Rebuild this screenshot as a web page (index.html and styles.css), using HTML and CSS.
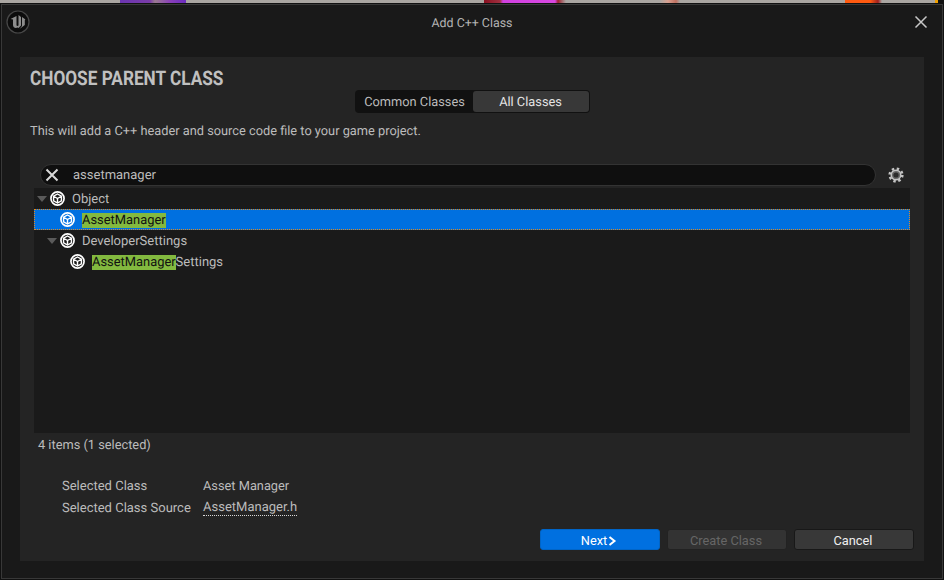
FILE: index.html
```html
<!DOCTYPE html>
<html lang="en">
<head>
<meta charset="utf-8">
<title>Add C++ Class</title>
<link rel="stylesheet" href="styles.css">
</head>
<body>
<div class="backdrop"></div>
<div class="window">
  <header class="titlebar">
    <svg class="logo" width="24" height="24" viewBox="0 0 24 24">
      <circle cx="12" cy="12" r="11" fill="#0c0c0c" stroke="#484848" stroke-width="1.2"/>
      <path d="M4.500 9L10.500 6V15C10.500 16 11.500 16.200 12.500 15.500V5L15 7V15.500L12.500 18L11.500 17.500C9.500 18.500 7 17.500 7 15V9.500Z" fill="#8c8c8c"/>
      <path d="M16 7L19.500 9.500C19 9.500 18.800 9.800 18.800 10.500V15L13.500 19L16 16Z" fill="#8c8c8c"/>
    </svg>
    <span class="title">Add C++ Class</span>
    <svg class="close" width="14" height="14" viewBox="0 0 14 14">
      <path d="M1.500 1.500l11 11M12.500 1.500l-11 11" stroke="#c8c8c8" stroke-width="1.500" fill="none"/>
    </svg>
  </header>
  <main class="panel">
    <h1 class="heading">CHOOSE PARENT CLASS</h1>
    <div class="tabs-wrap">
      <div class="tabs">
        <span class="tab">Common Classes</span>
        <span class="tab tab-active">All Classes</span>
      </div>
    </div>
    <p class="desc">This will add a C++ header and source code file to your game project.</p>
    <div class="search-row">
      <div class="search">
        <svg class="clear" width="14" height="14" viewBox="0 0 14 14">
          <path d="M1.500 1.500l11 11M12.500 1.500l-11 11" stroke="#d8d8d8" stroke-width="2" fill="none"/>
        </svg>
        <span class="search-text">assetmanager</span>
      </div>
      <svg class="gear" width="16" height="16" viewBox="0 0 16 16">
        <circle cx="8" cy="8" r="6.300" fill="none" stroke="#c4c4c4" stroke-width="2.600" stroke-dasharray="2.400 2.548"/>
        <circle cx="8" cy="8" r="4.800" fill="#6a6a6a" stroke="#c4c4c4" stroke-width="1.400"/>
        <circle cx="8" cy="8" r="2.600" fill="#2c2c2c"/>
      </svg>
    </div>
    <div class="tree">
      <div class="row">
        <span class="arrow"></span>
        <svg class="cube" viewBox="0 0 16 16"><use href="#cube"/></svg>
        <span class="label">Object</span>
      </div>
      <div class="row row-selected indent-1">
        <svg class="cube" viewBox="0 0 16 16"><use href="#cube"/></svg>
        <span class="label"><mark class="hit">AssetManager</mark></span>
      </div>
      <div class="row indent-arrow">
        <span class="arrow"></span>
        <svg class="cube" viewBox="0 0 16 16"><use href="#cube"/></svg>
        <span class="label">DeveloperSettings</span>
      </div>
      <div class="row indent-2">
        <svg class="cube" viewBox="0 0 16 16"><use href="#cube"/></svg>
        <span class="label"><mark class="hit">AssetManager</mark>Settings</span>
      </div>
    </div>
    <div class="status">4 items (1 selected)</div>
    <dl class="details">
      <div class="detail"><dt>Selected Class</dt><dd>Asset Manager</dd></div>
      <div class="detail"><dt>Selected Class Source</dt><dd><span class="link">AssetManager.h</span></dd></div>
    </dl>
    <div class="actions">
      <button class="btn btn-primary">Next<svg class="chev" width="9" height="10" viewBox="0 0 9 10"><path d="M1.500 1l5 4-5 4" fill="none" stroke="#fff" stroke-width="2"/></svg></button>
      <button class="btn btn-disabled">Create Class</button>
      <button class="btn">Cancel</button>
    </div>
  </main>
</div>
<svg class="defs" width="0" height="0">
  <symbol id="cube" viewBox="0 0 16 16">
    <circle cx="8" cy="8" r="7" fill="none" stroke="#fff" stroke-width="1.800"/>
    <path d="M8 3.200l4.200 2.400v4.800L8 12.800l-4.200-2.400V5.600zM3.800 5.600L8 8l4.200-2.400M8 8v4.800" fill="none" stroke="#fff" stroke-width="1.500"/>
  </symbol>
</svg>
</body>
</html>
```
FILE: styles.css
```css
* { box-sizing: border-box; }
html, body { height: 100%; }
body {
  margin: 0;
  background: #111;
  display: flex;
  flex-direction: column;
  overflow: hidden;
  padding: 0 1px 1px;
  font-family: Roboto, "Liberation Sans", sans-serif;
  font-size: 12.8px;
  text-rendering: geometricPrecision;
  color: #bcbcbc;
}
.backdrop {
  height: 3px;
  flex: none;
  margin: 0 5px 1px -1px;
  background: linear-gradient(90deg,
    #aaa6a2 0, #aaa6a2 120px, #6b35b0 120px, #7a3ca8 150px, #9a7a90 155px, #8a40b8 170px, #6b2cc0 186px, #aaa6a2 186px,
    #aaa6a2 484px, #8a1020 484px, #a03040 500px, #d040e0 503px, #d848e0 555px, #a02030 558px, #aaa6a2 566px,
    #aaa6a2 660px, #d8a090 668px, #c07060 676px, #aaa6a2 680px,
    #aaa6a2 845px, #ff5a10 845px, #ff5a10 870px, #a02020 878px, #aaa6a2 882px,
    #aaa6a2 935px, #f0a000 935px, #f0a000 938px);
}
.window {
  flex: 1;
  min-height: 0;
  display: flex;
  flex-direction: column;
  background: #191919;
  border: 1px solid #383838;
}
.titlebar {
  height: 52px;
  flex: none;
  display: flex;
  align-items: center;
  justify-content: space-between;
  position: relative;
  padding: 0 14px 18px 4px;
}
.title {
  flex: 1;
  text-align: center;
  color: #b4b4b4;
  font-size: 12.4px;
  padding-top: 2px;
}
.panel {
  flex: 1;
  min-height: 0;
  margin: 0 18px 17px;
  background: #242424;
  display: flex;
  flex-direction: column;
}
.heading {
  margin: 9px 0 0 10px;
  font-size: 20px;
  line-height: 24px;
  font-weight: 700;
  color: #c0c0c0;
  transform: scaleX(0.86);
  transform-origin: left center;
  white-space: nowrap;
}
.tabs-wrap { display: flex; justify-content: center; }
.tabs {
  display: flex;
  background: #111;
  border-radius: 4px;
  padding: 1px;
  height: 23px;
  width: 235px;
}
.tab {
  display: flex;
  align-items: center;
  justify-content: center;
  width: 117px;
  padding: 2px 0 0 1px;
}
.tab-active {
  flex: 1;
  background: #383838;
  border-radius: 3px;
  color: #e4e4e4;
  padding-left: 0;
}
.desc { margin: 10px 0 0 10px; line-height: 17px; }
.search-row {
  display: flex;
  align-items: center;
  margin: 24px 14px 0 20px;
  height: 22px;
  gap: 12px;
}
.search {
  flex: 1;
  height: 22px;
  display: flex;
  align-items: center;
  background: #0f0f0f;
  border: 1px solid #333;
  border-radius: 11px;
  padding-left: 4px;
  color: #bcbcbc;
}
.clear { flex: none; }
.search-text { margin-left: 14px; font-size: 13px; }
.gear { flex: none; margin-right: 6px; }
.tree {
  margin: 2px 14px 0;
  height: 245px;
  flex: none;
  background: #1a1a1a;
}
.row {
  height: 21px;
  display: flex;
  align-items: center;
  padding-left: 3px;
  font-size: 13px;
}
.label { padding-top: 2px; }
.arrow {
  width: 0;
  height: 0;
  flex: none;
  border-left: 5px solid transparent;
  border-right: 5px solid transparent;
  border-top: 6px solid #5a5a5a;
  margin-right: 3px;
}
.cube { width: 15px; height: 15px; flex: none; margin-right: 7px; }
.indent-1 { padding-left: 26px; }
.indent-arrow { padding-left: 13px; }
.indent-2 { padding-left: 36px; }
.row-selected {
  background: #0070e0;
  outline: 1px dotted #e08a20;
  outline-offset: -1px;
  color: #111;
}
.hit {
  background: #83b93f;
  color: #111;
  display: inline-block;
  line-height: 15px;
  font-size: 12.9px;
}
.status { margin: 4px 0 0 18px; line-height: 17px; }
.details { margin: 21px 0 0 42px; }
.detail { display: flex; height: 22px; align-items: center; }
.detail dt { width: 141px; font-size: 13px; }
.detail dd { margin: 0; }
.link { border-bottom: 1px dotted #d8d8d8; line-height: 14px; display: inline-block; font-size: 13px; }
.actions {
  display: flex;
  justify-content: flex-end;
  gap: 7px;
  margin: 10px 10px 0 0;
}
.btn {
  width: 120px;
  height: 21px;
  padding: 2px 2px 0 0;
  font: inherit;
  color: #efefef;
  background: #383838;
  border: 1px solid #181818;
  border-radius: 3px;
  display: flex;
  align-items: center;
  justify-content: center;
}
.btn-primary { background: #0070e0; color: #fff; border-color: #0065c8; }
.btn-disabled { color: #666; background: #333; border-color: #222; }
.chev { margin-left: 1px; }
.defs { position: absolute; }
```
